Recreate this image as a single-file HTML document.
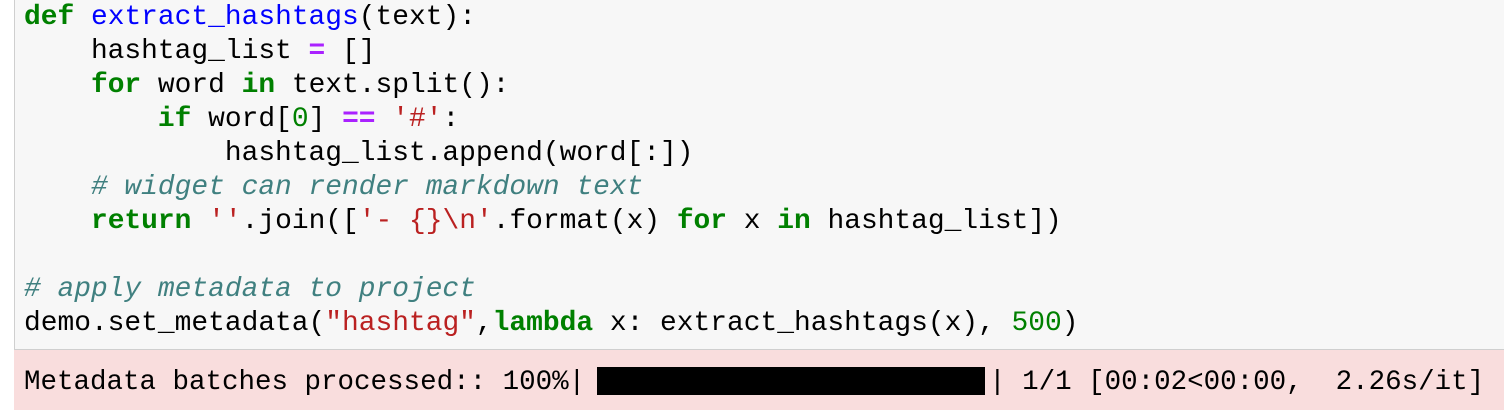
<!DOCTYPE html>
<html><head><style>
html,body{margin:0;padding:0;width:1504px;height:410px;overflow:hidden;background:#fff;}
.code{position:absolute;left:14px;top:-2px;width:1500px;height:352px;background:#f7f7f7;border:1px solid #cfcfcf;box-sizing:border-box;}
pre{margin:0;position:absolute;left:24px;top:1px;font-family:"Liberation Mono",monospace;font-size:27.9px;line-height:34px;color:#000;}
.k{color:#008000;font-weight:bold}.f{color:#0000ff}.c{color:#408080;font-style:italic}.s{color:#ba2121}.n{color:#008000}.o{color:#aa22ff;font-weight:bold}
.out{position:absolute;left:14px;top:350px;width:1490px;height:60px;background:#f9dddd;}
.out pre{left:10px;top:16px;line-height:34px;font-size:27.5px;}
.bar{display:inline-block;width:388px;height:28px;background:#000;vertical-align:-6px;margin:0 4px 0 12px;}
</style></head><body>
<div class="code"></div>
<pre><span class="k">def</span> <span class="f">extract_hashtags</span>(text):
    hashtag_list <span class="o">=</span> []
    <span class="k">for</span> word <span class="k">in</span> text.split():
        <span class="k">if</span> word[<span class="n">0</span>] <span class="o">==</span> <span class="s">'#'</span>:
            hashtag_list.append(word[:])
    <span class="c"># widget can render markdown text</span>
    <span class="k">return</span> <span class="s">''</span>.join([<span class="s">'- {}\n'</span>.format(x) <span class="k">for</span> x <span class="k">in</span> hashtag_list])

<span class="c"># apply metadata to project</span>
demo.set_metadata(<span class="s">"hashtag"</span>,<span class="k">lambda</span> x: extract_hashtags(x), <span class="n">500</span>)</pre>
<div class="out"><pre>Metadata batches processed:: 100%|<span class="bar"></span>| 1/1 [00:02&lt;00:00,  2.26s/it]</pre></div>
</body></html>
